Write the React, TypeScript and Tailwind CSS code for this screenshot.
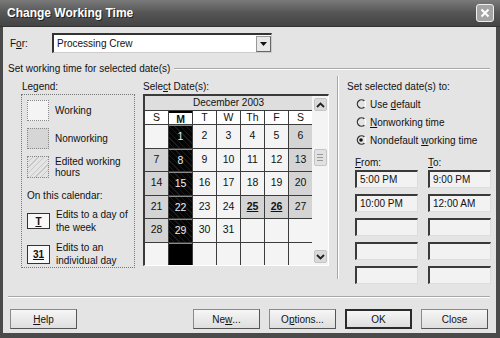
import React from 'react'

const cols = ['S', 'M', 'T', 'W', 'Th', 'F', 'S']

// December 2003 starts on Monday
const weeks: (number | null)[][] = [
  [null, 1, 2, 3, 4, 5, 6],
  [7, 8, 9, 10, 11, 12, 13],
  [14, 15, 16, 17, 18, 19, 20],
  [21, 22, 23, 24, 25, 26, 27],
  [28, 29, 30, 31, null, null, null],
  [null, null, null, null, null, null, null],
]

const edited = [25, 26]
const holidays = [25, 26]

const DayCell = ({ day, col }: { day: number | null; col: number }) => {
  if (col === 1) {
    return (
      <div
        className={`h-full border-t border-[#8a8a8a] flex justify-center pt-[3px] text-[#eee] ${
          day === null ? 'bg-black' : 'bg-[repeating-linear-gradient(45deg,#050505_0px,#050505_3px,#1c1c1c_3px,#1c1c1c_4px)]'
        }`}
      >
        {day}
      </div>
    )
  }
  const gray = day !== null && (col === 0 || col === 6 || holidays.includes(day))
  return (
    <div
      className={`h-full flex justify-center pt-[3px] ${gray ? 'bg-[#d4d4d4]' : 'bg-[#f4f4f4]'} ${
        day !== null && edited.includes(day) ? 'font-bold underline' : ''
      }`}
    >
      {day}
    </div>
  )
}

const Chevron = ({ up }: { up?: boolean }) => (
  <svg width="9" height="6" viewBox="0 0 9 6">
    <path d={up ? 'M1 5 L4.5 1.5 L8 5' : 'M1 1 L4.5 4.5 L8 1'} stroke="#222" strokeWidth="1.8" fill="none" />
  </svg>
)

const Radio = ({ checked, children }: { checked?: boolean; children: React.ReactNode }) => (
  <div className="flex items-center gap-[4px] h-[18px]">
    <svg width="10" height="10" viewBox="0 0 10 10">
      <path d="M8.5 2 A4.2 4.2 0 1 0 8.5 8" stroke="#333" strokeWidth="1.3" fill="none" />
      <path d="M8.5 2 A4.2 4.2 0 0 1 8.5 8" stroke="#fff" strokeWidth="1.3" fill="none" />
      {checked && <circle cx="5" cy="5" r="1.8" fill="#111" />}
    </svg>
    <span>{children}</span>
  </div>
)

const TimeBox = ({ value }: { value?: string }) => (
  <div className="w-[63px] h-[18px] bg-[#f2f2f2] border-t-2 border-l-2 border-t-[#3a3a3a] border-l-[#3a3a3a] border-r border-b border-r-[#dcdcdc] border-b-[#dcdcdc] pl-[3px] leading-[15px]">
    {value}
  </div>
)

const Button = ({ children, primary }: { children: React.ReactNode; primary?: boolean }) => (
  <div
    className={`w-[67px] h-[20px] flex items-center justify-center bg-gradient-to-b from-[#f6f6f6] to-[#dedede] ${
      primary ? 'border-2 border-[#2a2a2a]' : 'border border-[#8a8a8a] border-r-[#555] border-b-[#555]'
    }`}
  >
    {children}
  </div>
)

export default function App() {
  return (
    <div className="w-[500px] h-[338px] flex flex-col bg-[#e4e4e4] text-[10px] text-[#111] font-['Liberation_Sans',Arial,sans-serif] overflow-hidden">
      {/* Title bar */}
      <div className="h-[27px] shrink-0 flex items-center justify-between pl-[7px] pr-[6px] bg-gradient-to-b from-[#7a7a7a] via-[#555] to-[#444] border-b border-[#333]">
        <span className="text-white font-bold text-[12px] [text-shadow:1px_1px_0_#222]">Change Working Time</span>
        <div className="w-[18px] h-[18px] rounded-[3px] border border-[#eee] bg-[#a4a4a4] flex items-center justify-center">
          <svg width="10" height="10" viewBox="0 0 10 10">
            <path d="M1.5 1.5 L8.5 8.5 M8.5 1.5 L1.5 8.5" stroke="#fff" strokeWidth="2" />
          </svg>
        </div>
      </div>

      {/* Body */}
      <div className="flex-1 flex flex-col border-l-[3px] border-r-[4px] border-b-[5px] border-[#4a4a4a] pl-[5px] pr-[4px]">
        <div className="flex items-center mt-[6px] ml-[2px]">
          <span className="w-[42px]">
            F<span className="underline">o</span>r:
          </span>
          <div className="w-[220px] h-[20px] bg-white border-t-2 border-l-2 border-t-[#333] border-l-[#333] border-r border-b border-r-[#ccc] border-b-[#ccc] flex items-center">
            <span className="flex-1 pl-[3px]">Processing Crew</span>
            <div className="w-[15px] h-[16px] bg-[#e8e8e8] border border-[#999] border-r-[#666] border-b-[#666] flex items-center justify-center">
              <svg width="7" height="4" viewBox="0 0 7 4">
                <path d="M0 0 H7 L3.5 4 Z" fill="#111" />
              </svg>
            </div>
          </div>
        </div>

        <div className="flex items-center mt-[8px]">
          <span>Set working time for selected date(s)</span>
          <div className="flex-1 ml-[4px] mr-[2px] border-t border-b border-t-[#a8a8a8] border-b-white" />
        </div>

        <div className="flex mt-[5px]">
          <div className="flex pl-[13px]">
            <div className="w-[114px] flex flex-col">
              <span className="ml-[1px] mb-[1px] leading-[12px]">Legend:</span>
              <div className="h-[174px] border border-dotted border-[#777] pl-[5px] pt-[5px] flex flex-col">
                <div className="flex items-center gap-[6px] h-[21px]">
                  <div className="w-[22px] h-[21px] border border-dotted border-[#888] bg-[#f4f4f4]" />
                  <span>Working</span>
                </div>
                <div className="flex items-center gap-[6px] h-[21px] mt-[7px]">
                  <div className="w-[22px] h-[21px] border border-dotted border-[#888] bg-[#d6d6d6]" />
                  <span>Nonworking</span>
                </div>
                <div className="flex items-center gap-[6px] h-[22px] mt-[7px]">
                  <div className="w-[22px] h-[22px] border border-dotted border-[#888] bg-[repeating-linear-gradient(135deg,#e4e4e4_0px,#e4e4e4_3px,#c8c8c8_3px,#c8c8c8_4px)]" />
                  <span className="leading-[11px]">
                    Edited working
                    <br />
                    hours
                  </span>
                </div>
                <span className="mt-[10px]">On this calendar:</span>
                <div className="flex items-center gap-[6px] mt-[5px]">
                  <div className="w-[23px] h-[16px] border border-[#333] bg-[#f8f8f8] flex items-center justify-center font-bold underline">
                    T
                  </div>
                  <span className="leading-[13px]">
                    Edits to a day of
                    <br />
                    the week
                  </span>
                </div>
                <div className="flex items-center gap-[6px] mt-[7px]">
                  <div className="w-[23px] h-[19px] border border-[#333] bg-[#f8f8f8] flex items-center justify-center font-bold underline">
                    31
                  </div>
                  <span className="leading-[13px]">
                    Edits to an
                    <br />
                    individual day
                  </span>
                </div>
              </div>
            </div>

            <div className="ml-[8px] w-[186px] flex flex-col">
              <span className="leading-[12px] mb-[1px]">
                Sele<span className="underline">c</span>t Date(s):
              </span>
              <div className="h-[172px] flex border-t-2 border-l-2 border-t-[#3a3a3a] border-l-[#3a3a3a] border-r border-b border-r-white border-b-white bg-[#f0f0f0]">
                <div className="w-[167px] flex flex-col text-[10.5px]">
                  <div className="h-[14px] bg-[#dedede] text-center text-[10px] leading-[14px]">December 2003</div>
                  <div className="grid grid-cols-7 gap-x-px bg-[#3c3c3c] border-t border-[#3c3c3c] h-[14px]">
                    {cols.map((c, i) => (
                      <div
                        key={i}
                        className={`bg-white text-center leading-[12px] ${i === 1 ? 'border-t-2 border-black underline font-bold' : ''}`}
                      >
                        {c}
                      </div>
                    ))}
                  </div>
                  <div className="flex-1 grid grid-cols-7 grid-rows-6 gap-px bg-[#3c3c3c] pt-px">
                    {weeks.flatMap((w, r) =>
                      w.map((d, c) => <DayCell key={`${r}-${c}`} day={d} col={c} />)
                    )}
                  </div>
                </div>
                <div className="w-[16px] flex flex-col items-center bg-[#f4f4f4] pt-[2px] pb-[2px]">
                  <div className="w-[13px] h-[13px] rounded-[2px] bg-[#dadada] border border-[#c4c4c4] flex items-center justify-center">
                    <Chevron up />
                  </div>
                  <div className="w-[13px] h-[17px] mt-[38px] rounded-[2px] bg-[#e2e2e2] border border-[#c4c4c4] flex flex-col items-center justify-center gap-[2px]">
                    <div className="w-[6px] border-t border-[#999]" />
                    <div className="w-[6px] border-t border-[#999]" />
                    <div className="w-[6px] border-t border-[#999]" />
                  </div>
                  <div className="flex-1" />
                  <div className="w-[13px] h-[13px] rounded-[2px] bg-[#dadada] border border-[#c4c4c4] flex items-center justify-center">
                    <Chevron />
                  </div>
                </div>
              </div>
            </div>
          </div>

          <div className="ml-[8px] -mt-[5px] h-[203px] border-l border-r border-l-[#a8a8a8] border-r-white" />

          <div className="ml-[8px] flex flex-col">
            <span className="leading-[12px]">Set selected date(s) to:</span>
            <div className="ml-[9px] mt-[2px] flex flex-col">
              <Radio>
                Use <span className="underline">d</span>efault
              </Radio>
              <Radio>
                <span className="underline">N</span>onworking time
              </Radio>
              <Radio checked>
                Nondefault <span className="underline">w</span>orking time
              </Radio>
            </div>
            <div className="flex ml-[8px] mt-[9px] gap-[10px]">
              <div className="flex flex-col gap-[6px]">
                <span className="leading-[10px] -mb-[4px]">
                  <span className="underline">F</span>rom:
                </span>
                <TimeBox value="5:00 PM" />
                <TimeBox value="10:00 PM" />
                <TimeBox />
                <TimeBox />
                <TimeBox />
              </div>
              <div className="flex flex-col gap-[6px]">
                <span className="leading-[10px] -mb-[4px]">
                  <span className="underline">T</span>o:
                </span>
                <TimeBox value="9:00 PM" />
                <TimeBox value="12:00 AM" />
                <TimeBox />
                <TimeBox />
                <TimeBox />
              </div>
            </div>
          </div>
        </div>

        <div className="mt-auto mb-[11px] mr-[2px] border-t border-b border-t-[#a8a8a8] border-b-white" />

        <div className="flex items-center mb-[4px] ml-[2px] mr-[4px]">
          <Button>
            <span className="underline">H</span>elp
          </Button>
          <div className="flex-1" />
          <div className="flex gap-[9px]">
            <Button>
              Ne<span className="underline">w</span>...
            </Button>
            <Button>
              O<span className="underline">p</span>tions...
            </Button>
            <Button primary>OK</Button>
            <Button>Close</Button>
          </div>
        </div>
      </div>
    </div>
  )
}
